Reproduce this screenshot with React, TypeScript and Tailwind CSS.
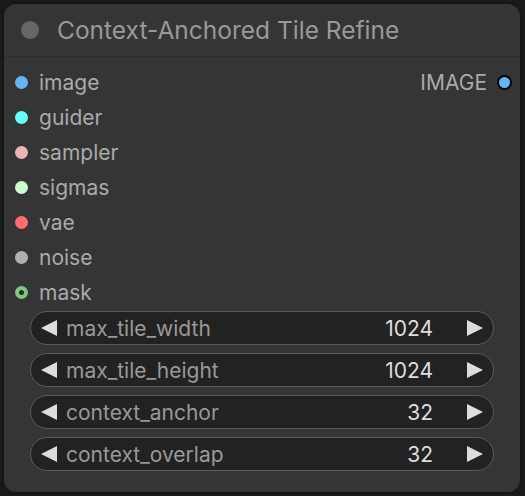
import React from 'react';

const inputs = [
  { name: 'image', color: '#64b5f6' },
  { name: 'guider', color: '#66ffff' },
  { name: 'sampler', color: '#ecb4b4' },
  { name: 'sigmas', color: '#cdffcd' },
  { name: 'vae', color: '#ff6e6e' },
  { name: 'noise', color: '#b0b0b0' },
  { name: 'mask', color: '#81c784', hollow: true },
];

const widgets = [
  { label: 'max_tile_width', value: '1024' },
  { label: 'max_tile_height', value: '1024' },
  { label: 'context_anchor', value: '32' },
  { label: 'context_overlap', value: '32' },
];

const Arrow = ({ dir }: { dir: 'left' | 'right' }) => (
  <svg width="16" height="16" viewBox="0 0 16 16" className="shrink-0">
    {dir === 'left' ? <polygon points="16,0 16,16 0,8" fill="#dddddd" /> : <polygon points="0,0 0,16 16,8" fill="#dddddd" />}
  </svg>
);

export default function App() {
  return (
    <div
      className="w-[525px] h-[496px] bg-[#1b1b1b] p-[4px] pr-[5px] pb-[4px]"
      style={{ fontFamily: 'Inter, "Noto Sans", sans-serif' }}
    >
      <div className="w-[516px] h-[488px] rounded-[12px] bg-[#353535] flex flex-col shadow-[0_0_4px_rgba(0,0,0,0.5)]">
        <div className="h-[53px] flex items-center border-b border-[#2c2c2c] pl-[17px] gap-[18px]">
          <span className="w-[18px] h-[18px] rounded-full bg-[#666666]" />
          <span className="text-[24.5px] text-[#999999] leading-none">Context-Anchored Tile Refine</span>
        </div>
        <div className="flex flex-col pt-[8px]">
          {inputs.map((s, i) => (
            <div key={s.name} className="h-[35px] flex items-center pl-[11px] pr-[8px]">
              {s.hollow ? (
                <span className="w-[13px] h-[13px] rounded-full bg-[#81c784] flex items-center justify-center">
                  <span className="w-[5px] h-[5px] rounded-full bg-[#2a2a2a]" />
                </span>
              ) : (
                <span className="w-[13px] h-[13px] rounded-full" style={{ backgroundColor: s.color }} />
              )}
              <span className="ml-[11px] text-[21px] text-[#aaaaaa] leading-none">{s.name}</span>
              {i === 0 && (
                <div className="ml-auto flex items-center gap-[10px]">
                  <span className="text-[21px] text-[#aaaaaa] leading-none">IMAGE</span>
                  <span className="w-[15px] h-[15px] rounded-full bg-[#64b5f6] border-2 border-black" />
                </div>
              )}
            </div>
          ))}
        </div>
        <div className="flex flex-col gap-[8px] mt-[1px] px-[26px]">
          {widgets.map((w) => (
            <div
              key={w.label}
              className="h-[34px] rounded-full bg-[#222222] border-[1.5px] border-[#5a5a5a] flex items-center pl-[10px] pr-[10px]"
            >
              <Arrow dir="left" />
              <span className="ml-[9px] text-[21px] text-[#999999] leading-none">{w.label}</span>
              <span className="ml-auto text-[21px] text-[#dddddd] leading-none">{w.value}</span>
              <span className="ml-[34px]">
                <Arrow dir="right" />
              </span>
            </div>
          ))}
        </div>
      </div>
    </div>
  );
}
